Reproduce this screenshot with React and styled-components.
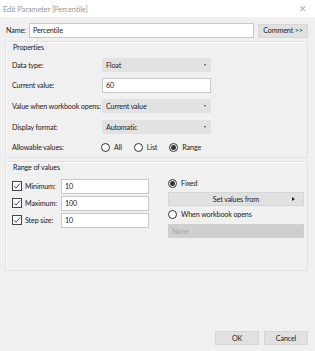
import styled, { createGlobalStyle } from 'styled-components';

const Global = createGlobalStyle`
  html, body {
    margin: 0;
    padding: 0;
    background: #f0f0f0;
  }
  * { box-sizing: border-box; }
`;

const Window = styled.div`
  width: 315px;
  height: 351px;
  display: flex;
  flex-direction: column;
  font-family: Lato, "Liberation Sans", sans-serif;
  font-size: 7.2px;
  letter-spacing: -0.15px;
  color: #222;
  background: #f0f0f0;
  overflow: hidden;
  white-space: nowrap;
`;

const TitleBar = styled.div`
  height: 17px;
  background: #fff;
  display: flex;
  align-items: center;
  justify-content: space-between;
  padding: 0 8px 0 3px;
  color: #999;
  font-size: 7.6px;
`;

const Close = styled.span`
  color: #aaa;
  font-size: 9px;
`;

const Body = styled.div`
  flex: 1;
  display: flex;
  flex-direction: column;
  padding: 6px 7px 6px 5px;
`;

const NameRow = styled.div`
  display: flex;
  align-items: center;
  gap: 4px;
  padding-left: 1px;
  margin-bottom: 3px;
`;

const NameLabel = styled.span`
  width: 19px;
`;

const TextBox = styled.div`
  flex-shrink: 0;
  width: ${p => p.w}px;
  height: 15px;
  background: #fff;
  border: 1px solid #c9c9c9;
  display: flex;
  align-items: center;
  padding-left: 3px;
`;

const Button = styled.div`
  flex-shrink: 0;
  width: ${p => p.w}px;
  height: 14px;
  background: #e1e1e1;
  border: 1px solid #d6d6d6;
  display: flex;
  align-items: center;
  justify-content: center;
  position: relative;
`;

const Panel = styled.div`
  border: 1px solid #e2e2e2;
  box-shadow: inset 1px 1px 0 #fafafa;
  height: ${p => p.h}px;
  margin-bottom: 3px;
  padding: 1px 0 0 6px;
`;

const PanelTitle = styled.div`
  height: 10px;
  line-height: 10px;
  padding-left: 1px;
  margin-bottom: ${p => p.mb}px;
`;

const PropRow = styled.div`
  display: flex;
  align-items: center;
  height: 20.6px;
`;

const Label = styled.div`
  width: 90px;
  flex-shrink: 0;
`;

const Select = styled.div`
  flex-shrink: 0;
  width: ${p => p.w}px;
  height: 14px;
  background: ${p => (p.disabled ? '#cfcfcf' : '#e2e2e2')};
  color: ${p => (p.disabled ? '#a8a8a8' : '#222')};
  display: flex;
  align-items: center;
  justify-content: space-between;
  padding: 0 5px 0 4px;

  &::after {
    content: '';
    border-left: 1.5px solid transparent;
    border-right: 1.5px solid transparent;
    border-top: 2px solid ${p => (p.disabled ? '#bbb' : '#444')};
  }
`;

const Radios = styled.div`
  display: flex;
  gap: 12px;
  margin-left: -1px;
`;

const RadioItem = styled.label`
  display: flex;
  align-items: center;
  gap: 4px;
`;

const Radio = styled.span`
  flex-shrink: 0;
  width: 9px;
  height: 9px;
  border-radius: 50%;
  border: 1px solid #333;
  background: #fff;
  display: inline-flex;
  align-items: center;
  justify-content: center;

  &::after {
    content: '';
    width: 5px;
    height: 5px;
    border-radius: 50%;
    background: ${p => (p.on ? '#333' : 'transparent')};
  }
`;

const RangeGrid = styled.div`
  display: flex;
  gap: 19px;
`;

const RangeLeft = styled.div`
  display: flex;
  flex-direction: column;
  gap: 3px;
`;

const RangeRow = styled.div`
  display: flex;
  align-items: center;
  height: 14px;
`;

const Check = styled.span`
  flex-shrink: 0;
  width: 10px;
  height: 10px;
  border: 1px solid #444;
  background: #fff;
  margin-right: 3px;
  display: inline-flex;
  align-items: center;
  justify-content: center;
`;

const RangeLabel = styled.div`
  width: 36px;
  flex-shrink: 0;
`;

const RangeRight = styled.div`
  width: 136px;
  display: flex;
  flex-direction: column;
  margin-top: -1px;
`;

const OptRow = styled.div`
  display: flex;
  align-items: center;
  gap: 4px;
  height: 11px;
  margin: ${p => p.mt || 0}px 0 ${p => p.mb || 0}px;
`;

const Arrow = styled.span`
  position: absolute;
  right: 8px;
  top: 4px;
  border-top: 2.5px solid transparent;
  border-bottom: 2.5px solid transparent;
  border-left: 3px solid #222;
`;

const Footer = styled.div`
  margin-top: auto;
  display: flex;
  justify-content: flex-end;
  gap: 5px;
`;

const CheckMark = () => (
  <svg width="8" height="8" viewBox="0 0 8 8">
    <path d="M1 4.2 L3 6.2 L7 1.5" fill="none" stroke="#333" strokeWidth="0.9" />
  </svg>
);

export default function App() {
  return (
    <Window>
      <Global />
      <TitleBar>
        <span>Edit Parameter [Percentile]</span>
        <Close>✕</Close>
      </TitleBar>
      <Body>
        <NameRow>
          <NameLabel>Name:</NameLabel>
          <TextBox w={225}>Percentile</TextBox>
          <Button w={50}>Comment &gt;&gt;</Button>
        </NameRow>

        <Panel h={117}>
          <PanelTitle mb={2}>Properties</PanelTitle>
          <PropRow>
            <Label>Data type:</Label>
            <Select w={109}>Float</Select>
          </PropRow>
          <PropRow>
            <Label>Current value:</Label>
            <TextBox w={109}>60</TextBox>
          </PropRow>
          <PropRow>
            <Label>Value when workbook opens:</Label>
            <Select w={109}>Current value</Select>
          </PropRow>
          <PropRow>
            <Label>Display format:</Label>
            <Select w={109}>Automatic</Select>
          </PropRow>
          <PropRow>
            <Label>Allowable values:</Label>
            <Radios>
              <RadioItem><Radio />All</RadioItem>
              <RadioItem><Radio />List</RadioItem>
              <RadioItem><Radio on />Range</RadioItem>
            </Radios>
          </PropRow>
        </Panel>

        <Panel h={110}>
          <PanelTitle mb={6}>Range of values</PanelTitle>
          <RangeGrid>
            <RangeLeft>
              <RangeRow>
                <Check><CheckMark /></Check>
                <RangeLabel>Minimum:</RangeLabel>
                <TextBox w={88}>10</TextBox>
              </RangeRow>
              <RangeRow>
                <Check><CheckMark /></Check>
                <RangeLabel>Maximum:</RangeLabel>
                <TextBox w={88}>100</TextBox>
              </RangeRow>
              <RangeRow>
                <Check><CheckMark /></Check>
                <RangeLabel>Step size:</RangeLabel>
                <TextBox w={88}>10</TextBox>
              </RangeRow>
            </RangeLeft>
            <RangeRight>
              <OptRow mb={3}>
                <Radio on />
                Fixed
              </OptRow>
              <Button w={136}>
                Set values from
                <Arrow />
              </Button>
              <OptRow mt={3} mb={4}>
                <Radio />
                When workbook opens
              </OptRow>
              <Select w={136} disabled>None</Select>
            </RangeRight>
          </RangeGrid>
        </Panel>

        <Footer>
          <Button w={44}>OK</Button>
          <Button w={44}>Cancel</Button>
        </Footer>
      </Body>
    </Window>
  );
}
